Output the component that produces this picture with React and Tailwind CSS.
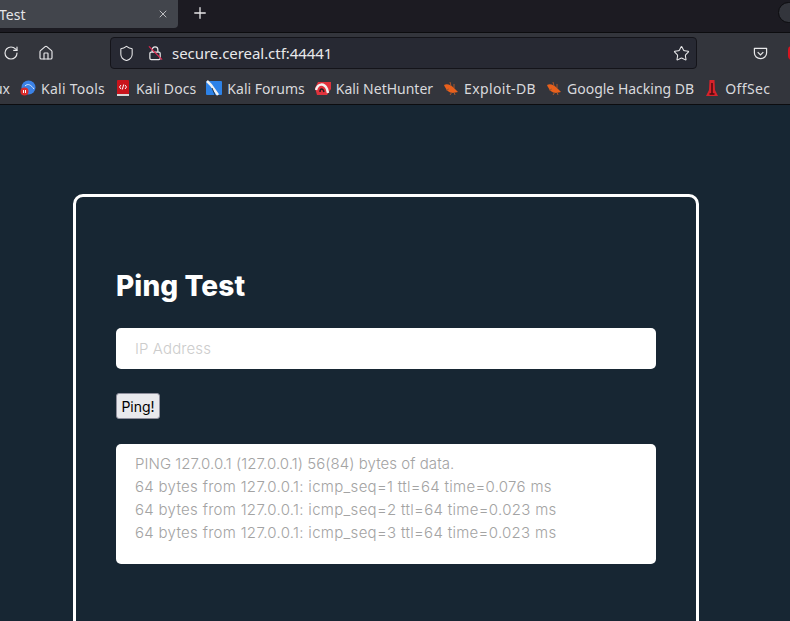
import { RotateCw, Home, Shield, Star, X, Plus } from 'lucide-react';

const Bookmark = ({ icon, label, tracking }) => (
    <div className="flex items-center gap-[5px] shrink-0">
        <svg viewBox="0 0 16 16" className="w-4 h-4 shrink-0">{icon}</svg>
        <span className={tracking}>{label}</span>
    </div>
);

const bug = (
    <>
        <path d="M1 5 C4 3 8 5 11 8 L15 12 L10 13 C6 13 3 10 1 5 Z" fill="#e8601c" />
        <path d="M3 10 L6 9 M7 2 L8 6 M11 4 L11 8 M7 15 L9 12 M12 15 L11 12" stroke="#a8562c" strokeWidth="1" />
    </>
);

const bookmarks = [
    {
        label: 'Kali Tools',
        tracking: 'tracking-[0.25px]',
        icon: (
            <>
                <circle cx="8.5" cy="7.5" r="7" fill="#3b82e6" />
                <path d="M5 6 C8 3 11 5 14 9" stroke="#dbe9fb" strokeWidth="1" fill="none" />
                <circle cx="4.5" cy="11.5" r="4" fill="#d92b2b" />
                <path d="M3.5 10 V13 M5.5 10 V13" stroke="#fff" strokeWidth="1" />
            </>
        ),
    },
    {
        label: 'Kali Docs',
        tracking: 'tracking-[0.1px]',
        icon: (
            <>
                <rect x="2" y="0" width="12" height="15" rx="1" fill="#c9141c" />
                <rect x="2" y="14" width="12" height="2" fill="#d8d8d8" />
                <path d="M6 5 L4.5 7 L6 9 M10 5 L11.5 7 L10 9 M8.7 4.5 L7.3 9.5" stroke="#fff" strokeWidth="1" fill="none" />
            </>
        ),
    },
    {
        label: 'Kali Forums',
        tracking: 'tracking-normal',
        icon: (
            <>
                <rect x="0" y="1" width="16" height="14" rx="1" fill="#2d82e8" />
                <path d="M1 1 L5 5 L12 15" stroke="#f2f2f2" strokeWidth="2.5" fill="none" />
                <path d="M6 8 L9 15" stroke="#20364f" strokeWidth="1" />
            </>
        ),
    },
    {
        label: 'Kali NetHunter',
        tracking: 'tracking-normal',
        icon: (
            <>
                <path d="M3 2 H16 V9 L12 15 H2 L0 8 Z" fill="#e0323c" />
                <path d="M1 10 C3 3 9 3 12 9 L13 13" stroke="#f1f1f1" strokeWidth="2.5" fill="none" />
                <path d="M5 12 C5 8 8 8 9 12" stroke="#222" strokeWidth="1.5" fill="none" />
            </>
        ),
    },
    { label: 'Exploit-DB', icon: bug, tracking: 'tracking-[0.35px]' },
    { label: 'Google Hacking DB', icon: bug, tracking: 'tracking-normal' },
    {
        label: 'OffSec',
        tracking: 'tracking-[0.4px]',
        icon: (
            <>
                <path d="M5.5 0 H10.5 L11 10 L14 16 H2 L5 10 Z" fill="#d8222a" />
                <path d="M8 3 V14 M5.5 14 H10.5" stroke="#4a0a0e" strokeWidth="1.5" />
            </>
        ),
    },
];

const pingLines = [
    { text: 'PING 127.0.0.1 (127.0.0.1) 56(84) bytes of data.', className: 'tracking-[0.05px]' },
    { text: '64 bytes from 127.0.0.1: icmp_seq=1 ttl=64 time=0.076 ms', className: 'tracking-[0.3px]' },
    { text: '64 bytes from 127.0.0.1: icmp_seq=2 ttl=64 time=0.023 ms', className: 'tracking-[0.3px]' },
    { text: '64 bytes from 127.0.0.1: icmp_seq=3 ttl=64 time=0.023 ms', className: 'tracking-[0.3px]' },
];

const App = () => {
    return (
        <div className="h-[621px] w-[790px] overflow-hidden flex flex-col bg-[#172633] font-['Inter',sans-serif]">
            {/* Tab strip */}
            <div className="h-[33px] shrink-0 flex bg-[#1c1b22] border-b border-[#0c0c0f] text-[#e6e6e8] font-['Noto_Sans',sans-serif]">
                <div className="w-[178px] h-[28px] bg-[#42454c] rounded-br-[4px] flex items-center justify-between pr-[9px] text-[14px]">
                    <span className="-ml-[1px]">Test</span>
                    <X size={12} strokeWidth={1.5} />
                </div>
                <div className="ml-[13px] h-[26px] flex items-center">
                    <Plus size={18} strokeWidth={1.75} />
                </div>
                <div className="ml-auto -mr-[10px] mt-[2px] w-[22px] h-[21px] rounded-full bg-[#33353c] border border-[#0c0c0f]" />
            </div>

            {/* Nav toolbar */}
            <div className="h-[40px] shrink-0 flex items-center bg-[#33353c] text-[#e8e8ea]">
                <RotateCw size={16} strokeWidth={1.75} className="ml-[3px] shrink-0" />
                <Home size={16} strokeWidth={1.75} className="ml-[19px] shrink-0" />
                <div className="ml-[56px] w-[587px] h-[32px] shrink-0 flex items-center rounded-[4px] bg-[#272933] border border-[#14141a] pl-[7px] pr-[6px] font-['Noto_Sans',sans-serif]">
                    <Shield size={17} strokeWidth={1.5} />
                    <svg viewBox="0 0 16 16" className="w-[15px] h-[16px] ml-[13px]" fill="none">
                        <rect x="2" y="7" width="11" height="8" rx="1.5" stroke="#e8e8ea" strokeWidth="1.3" />
                        <path d="M4.5 7 V4.5 a3 3 0 0 1 6 0 V7" stroke="#e8e8ea" strokeWidth="1.3" />
                        <path d="M1 1 L15 15" stroke="#e22850" strokeWidth="1.3" />
                    </svg>
                    <span className="ml-[9px] text-[15px] tracking-[-0.05px]">secure.cereal.ctf:44441</span>
                    <Star size={17} strokeWidth={1.5} className="ml-auto" />
                </div>
                <svg viewBox="0 0 16 16" className="w-[15px] h-[15px] ml-[56px] shrink-0" fill="none" stroke="#e8e8ea" strokeWidth="1.3">
                    <path d="M1.5 2.5 H14.5 V7.5 a6.5 6 0 0 1 -13 0 Z" strokeLinejoin="round" />
                    <path d="M5 6.5 L8 9.5 L11 6.5" />
                </svg>
                <div className="ml-[20px] w-[8px] h-[14px] rounded-full bg-[#d7141f] shrink-0" />
            </div>

            {/* Bookmarks */}
            <div className="h-[32px] shrink-0 flex items-center gap-[10px] pb-[1px] bg-[#33353c] border-b border-[#0c0c0f] text-[14px] text-[#d9d9dc] font-['Noto_Sans',sans-serif] overflow-hidden">
                <span className="w-[10px] overflow-hidden flex justify-end shrink-0">ux</span>
                <div className="flex items-center gap-[10px]">
                    {bookmarks.map((b) => (
                        <Bookmark key={b.label} icon={b.icon} label={b.label} tracking={b.tracking} />
                    ))}
                </div>
            </div>

            {/* Page */}
            <div className="flex-1 min-h-0 pt-[89px] pl-[73px]">
                <div className="w-[626px] h-[600px] border-[3px] border-white rounded-[10px] pt-[71px] px-[40px]">
                    <h1 className="text-[28px] leading-[36px] font-extrabold text-white tracking-[0.1px]">Ping Test</h1>
                    <input
                        readOnly
                        placeholder="IP Address"
                        className="block mt-[24px] w-[540px] h-[41px] rounded-[5px] bg-white px-[19px] text-[15px] tracking-[0.1px] placeholder:text-[#cccccc] font-light outline-none"
                    />
                    <button className="block mt-[24px] w-[44px] h-[26px] rounded-[3px] bg-[#e9e9ed] border border-[#8f8f9d] text-[14px] text-black">
                        Ping!
                    </button>
                    <div className="mt-[25px] w-[540px] h-[120px] rounded-[5px] bg-white pt-[8px] px-[19px] text-[15px] leading-[23px] font-light text-[#a3a3a3]">
                        {pingLines.map((line) => (
                            <div key={line.text} className={line.className}>{line.text}</div>
                        ))}
                    </div>
                </div>
            </div>
        </div>
    );
};

export default App;
